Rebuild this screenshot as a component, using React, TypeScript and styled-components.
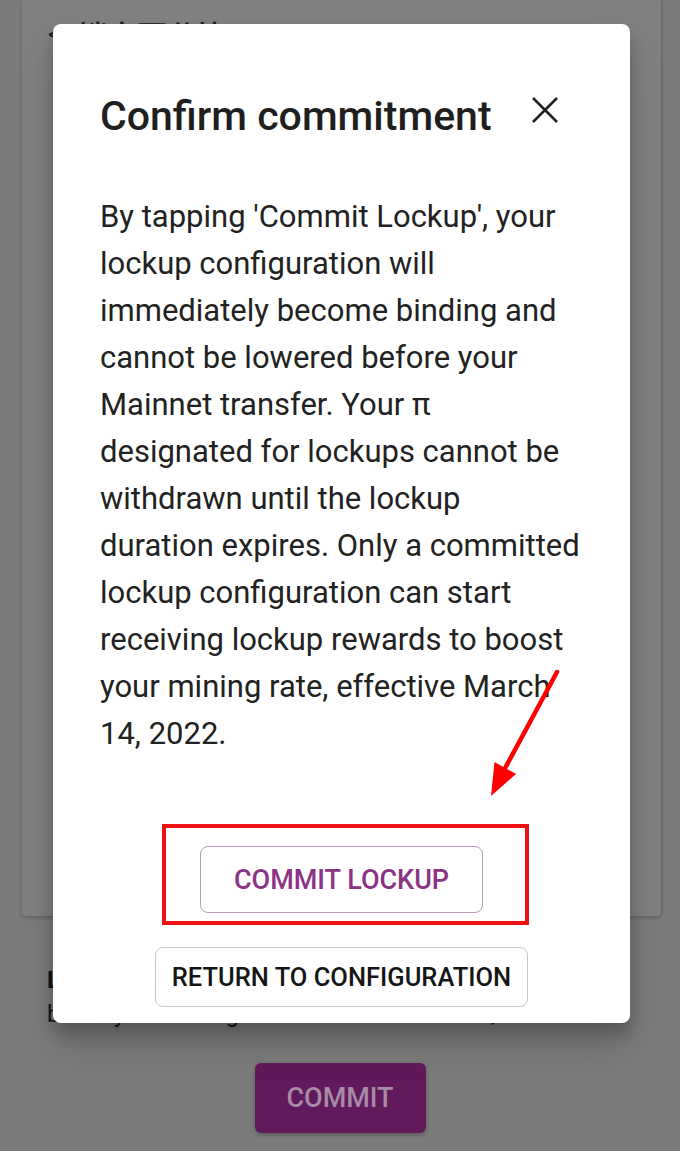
import React from "react";
import styled, { createGlobalStyle } from "styled-components";

const Global = createGlobalStyle`
  html, body { margin: 0; padding: 0; }
  body {
    background: #7b7b7b;
    font-family: Roboto, "Noto Sans", "Noto Sans CJK SC", sans-serif;
    -webkit-font-smoothing: antialiased;
  }
`;

const Screen = styled.div`
  position: relative;
  width: 680px;
  height: 1151px;
  overflow: hidden;
  background: #7b7b7b;
`;

const Card = styled.div`
  margin: 0 19px 0 22px;
  height: 916px;
  background: #808080;
  border-radius: 0 0 4px 4px;
  box-shadow: 0 2px 4px rgba(0, 0, 0, 0.18), 1px 0 2px rgba(0, 0, 0, 0.12);
`;

const Header = styled.div`
  display: flex;
  align-items: center;
  gap: 16px;
  padding: 14px 0 0 26px;
  color: #1c1c1c;
`;

const Back = styled.span`
  font-size: 26px;
  line-height: 40px;
`;

const HeaderTitle = styled.h1`
  margin: 0;
  font-size: 30px;
  line-height: 40px;
  font-weight: 500;
  font-family: "Noto Sans CJK SC", sans-serif;
`;

const Below = styled.div`
  display: flex;
  flex-direction: column;
  padding: 49px 47px 0;
  color: #141414;
`;

const BelowTitle = styled.div`
  font-size: 24px;
  line-height: 30px;
  font-weight: 700;
`;

const BelowText = styled.div`
  font-size: 24px;
  line-height: 38px;
`;

const CommitButton = styled.button`
  align-self: center;
  margin-top: 30px;
  width: 171px;
  height: 70px;
  border: none;
  border-radius: 6px;
  background: #601a5b;
  color: #a78aa4;
  font-family: Roboto, sans-serif;
  font-size: 27px;
  font-weight: 500;
  box-shadow: 0 2px 4px rgba(0, 0, 0, 0.25);
`;

const Modal = styled.div`
  position: absolute;
  top: 24px;
  left: 53px;
  width: 577px;
  height: 999px;
  background: #ffffff;
  border-radius: 8px;
  overflow: hidden;
  box-shadow: 0 11px 15px rgba(0, 0, 0, 0.2), 0 24px 38px rgba(0, 0, 0, 0.14);
  display: flex;
  flex-direction: column;
  padding: 68px 47px 0;
  box-sizing: border-box;
`;

const TitleRow = styled.div`
  display: flex;
  justify-content: space-between;
  align-items: flex-start;
`;

const Title = styled.h2`
  margin: 0;
  font-size: 41px;
  line-height: 48px;
  font-weight: 500;
  color: #1f1f1f;
`;

const CloseButton = styled.button`
  width: 30px;
  height: 30px;
  margin: 3px 23px 0 0;
  padding: 0;
  border: none;
  background: none;
  display: flex;
  align-items: center;
  justify-content: center;
`;

const Body = styled.p`
  margin: 53px 0 0;
  font-size: 31px;
  line-height: 47px;
  color: #222222;
  white-space: nowrap;
`;

const Actions = styled.div`
  display: flex;
  flex-direction: column;
  align-items: center;
  gap: 34px;
  margin-top: 89px;
`;

const Slot = styled.div`
  position: relative;
`;

const Highlight = styled.div`
  position: absolute;
  inset: -22px -46px -12px -38px;
  border: 4px solid #ee1111;
  pointer-events: none;
`;

const OutlineButton = styled.button<{ $tone: "primary" | "neutral" }>`
  height: ${(p) => (p.$tone === "primary" ? "67px" : "60px")};
  width: ${(p) => (p.$tone === "primary" ? "283px" : "373px")};
  padding: 0;
  background: #ffffff;
  border: 1.5px solid ${(p) => (p.$tone === "primary" ? "#b998b6" : "#c8c8c8")};
  border-radius: 8px;
  color: ${(p) => (p.$tone === "primary" ? "#8b3384" : "#161616")};
  font-family: Roboto, sans-serif;
  font-size: ${(p) => (p.$tone === "primary" ? "27px" : "25.5px")};
  font-weight: 500;
`;

const Arrow = styled.svg`
  position: absolute;
  left: 0;
  top: 0;
  pointer-events: none;
`;

const lines = [
  "By tapping 'Commit Lockup', your",
  "lockup configuration will",
  "immediately become binding and",
  "cannot be lowered before your",
  "Mainnet transfer. Your π",
  "designated for lockups cannot be",
  "withdrawn until the lockup",
  "duration expires. Only a committed",
  "lockup configuration can start",
  "receiving lockup rewards to boost",
  "your mining rate, effective March",
  "14, 2022.",
];

export default function App() {
  return (
    <>
      <Global />
      <Screen>
        <Card>
          <Header>
            <Back>&lt;</Back>
            <HeaderTitle>锁定百分比</HeaderTitle>
          </Header>
        </Card>
        <Below>
          <BelowTitle>Lockup rewards</BelowTitle>
          <BelowText>boost your mining rate effective March 14, 2022.</BelowText>
          <CommitButton>COMMIT</CommitButton>
        </Below>

        <Modal>
          <TitleRow>
            <Title>Confirm commitment</Title>
            <CloseButton aria-label="close">
              <svg width="28" height="28" viewBox="0 0 28 28">
                <path d="M2 2 L26 26 M26 2 L2 26" stroke="#222" strokeWidth="2.6" strokeLinecap="butt" />
              </svg>
            </CloseButton>
          </TitleRow>
          <Body>
            {lines.map((l, i) => (
              <React.Fragment key={i}>
                {l}
                {i < lines.length - 1 && <br />}
              </React.Fragment>
            ))}
          </Body>
          <Actions>
            <Slot>
              <OutlineButton $tone="primary">COMMIT LOCKUP</OutlineButton>
              <Highlight />
            </Slot>
            <OutlineButton $tone="neutral">RETURN TO CONFIGURATION</OutlineButton>
          </Actions>
        </Modal>

        <Arrow width="680" height="1151" viewBox="0 0 680 1151">
          <line x1="557" y1="672" x2="503" y2="772" stroke="#f00" strokeWidth="4.5" strokeLinecap="round" />
          <polygon points="491,796 494.5,762 516,774" fill="#f00" />
        </Arrow>
      </Screen>
    </>
  );
}
